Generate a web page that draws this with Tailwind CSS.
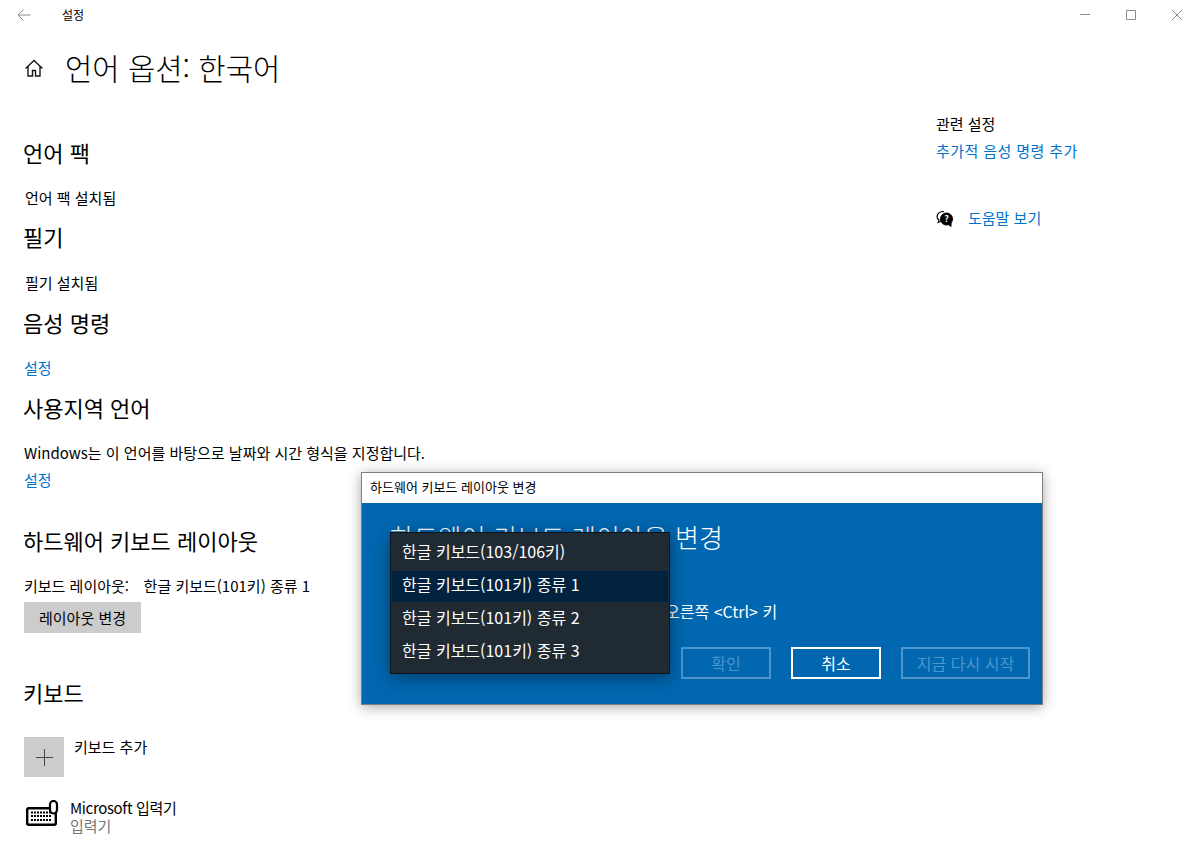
<!DOCTYPE html>
<html lang="ko">
<head>
    <meta charset="UTF-8">
    <title>설정</title>
    <script src="https://cdn.jsdelivr.net/npm/@tailwindcss/browser@4"></script>
</head>
<body class="relative w-[1194px] h-[850px] overflow-hidden bg-white text-[15px] leading-[20px] text-black font-['Noto_Sans_CJK_KR','Noto_Sans',sans-serif]">
    <!-- title bar -->
    <header class="flex items-center h-[30px] pl-[17px]">
        <svg class="w-[14px] h-[14px] text-[#8a8a8a]" viewBox="0 0 14 14" fill="none" stroke="currentColor" stroke-width="1"><path d="M13.500 7H1M6.500 1.500 1 7l5.500 5.500"/></svg>
        <span class="ml-[31px] mb-[1px] text-[12px]">설정</span>
        <div class="ml-auto flex items-center gap-[36px] pr-[12px] text-[#8c8c8c]">
            <svg class="w-[10px] h-[10px]" viewBox="0 0 10 10" stroke="currentColor" fill="none"><path d="M0 4.500h10"/></svg>
            <svg class="w-[10px] h-[10px]" viewBox="0 0 10 10" stroke="currentColor" fill="none"><path d="M.5.5h9v9h-9z"/></svg>
            <svg class="w-[10px] h-[10px]" viewBox="0 0 10 10" stroke="currentColor" fill="none"><path d="M0 0l10 10M10 0 0 10"/></svg>
        </div>
    </header>

    <div class="flex">
        <main class="w-[936px] pl-[24px]">
            <div class="flex items-center h-[40px] mt-[18px]">
                <svg class="w-[20px] h-[20px]" viewBox="0 0 20 20" fill="none" stroke="#1a1a1a" stroke-width="1.400"><path d="M1.500 10.500 10 2.500l8.500 8M4 8.500V18h4.500v-5.500h3V18H16V8.500"/></svg>
                <h1 class="ml-[21px] text-[29.7px] leading-[40px] font-light">언어 옵션: 한국어</h1>
            </div>

            <h2 class="mt-[49px] -ml-[1px] text-[22px] leading-[30px]">언어 팩</h2>
            <p class="mt-[21px] ml-[1px]">언어 팩 설치됨</p>
            <h2 class="mt-[13px] -ml-[1px] text-[22px] leading-[30px]">필기</h2>
            <p class="mt-[22px] ml-[1px]">필기 설치됨</p>
            <h2 class="mt-[14px] -ml-[1px] text-[22px] leading-[30px]">음성 명령</h2>
            <a class="block mt-[21px] text-[#0073cf]">설정</a>
            <h2 class="mt-[14px] -ml-[1px] text-[22px] leading-[30px]">사용지역 언어</h2>
            <p class="mt-[21px]">Windows는 이 언어를 바탕으로 날짜와 시간 형식을 지정합니다.</p>
            <a class="block mt-[7px] text-[#0073cf]">설정</a>
            <h2 class="mt-[35px] -ml-[1px] text-[22px] leading-[30px]">하드웨어 키보드 레이아웃</h2>
            <p class="mt-[21px]">키보드 레이아웃:&nbsp;&nbsp; <span class="ml-[2px]">한글 키보드(101키) 종류 1</span></p>
            <button class="block mt-[6px] w-[117px] h-[31px] bg-[#cccccc]">레이아웃 변경</button>
            <h2 class="mt-[44px] -ml-[1px] text-[22px] leading-[30px]">키보드</h2>

            <div class="flex mt-[30px]">
                <div class="flex items-center justify-center w-[40px] h-[40px] bg-[#cccccc]">
                    <svg class="w-[17px] h-[17px]" viewBox="0 0 17 17" stroke="#444" fill="none"><path d="M8.500 0v17M0 8.500h17"/></svg>
                </div>
                <span class="ml-[10px]">키보드 추가</span>
            </div>
            <div class="flex mt-[20px]">
                <svg class="w-[34px] h-[28px] mt-[3px] ml-[2px]" viewBox="0 0 34 28" fill="none" stroke="#000">
                    <rect x="1.200" y="8.200" width="28.600" height="16.600" rx="1.500" stroke-width="2.400"/>
                    <path d="M5 12.500h20M5 16h20M5 20h20" stroke-width="2.200" stroke-dasharray="2 1"/>
                    <rect x="24" y="1" width="7" height="12.500" rx="3.500" fill="#fff" stroke-width="2.200"/>
                </svg>
                <div class="ml-[10px] mt-[1px]">
                    <p class="leading-[19px] tracking-[-0.35px]">Microsoft 입력기</p>
                    <p class="leading-[18px] text-[#767676]">입력기</p>
                </div>
            </div>
        </main>

        <aside class="pt-[84px]">
            <p>관련 설정</p>
            <a class="block mt-[7px] text-[#0073cf] tracking-[0.4px]">추가적 음성 명령 추가</a>
            <div class="flex items-center mt-[47px]">
                <svg class="w-[17px] h-[17px]" viewBox="0 0 17 17" fill="none" stroke="#000">
                    <path d="M8 1.500C4 1.500 1 3.500 1 6.500c0 1.500.8 2.700 2 3.500l-.8 2.500L5.500 11" stroke-width="1.200"/>
                    <circle cx="10.500" cy="9" r="6" fill="#000"/>
                    <path d="m12 14 3 2.500V12" fill="#000"/>
                    <text x="10.500" y="12" text-anchor="middle" font-size="9" font-weight="700" fill="#fff" stroke="none">?</text>
                </svg>
                <a class="ml-[15px] text-[#0073cf]">도움말 보기</a>
            </div>
        </aside>
    </div>

    <!-- dialog window -->
    <section class="absolute left-[361px] top-[472px] w-[682px] h-[233px] border border-[#7d7d7d] shadow-[0_2px_12px_rgba(0,0,0,0.35)] flex flex-col">
        <div class="h-[30px] bg-white pl-[8px] text-[13px] leading-[28px]">하드웨어 키보드 레이아웃 변경</div>
        <div class="relative flex-1 bg-[#0067b0] text-white text-[16px]">
            <h3 class="mt-[16px] ml-[28px] text-[26px] leading-[36px] font-light">하드웨어 키보드 레이아웃 변경</h3>
            <p class="mt-[46px] ml-[303px]">오른쪽 &lt;Ctrl&gt; 키</p>
            <div class="flex justify-end gap-[20px] mt-[26px] pr-[12px]">
                <button class="w-[90px] h-[32px] border-2 border-[#4d95cb] text-[#4d95cb]">확인</button>
                <button class="w-[90px] h-[32px] border-2 border-white">취소</button>
                <button class="w-[129px] h-[32px] border-2 border-[#4d95cb] text-[#4d95cb]">지금 다시 시작</button>
            </div>

            <!-- open dropdown -->
            <ul class="absolute left-[28px] top-[29px] w-[280px] h-[142px] border border-[#0d1318] bg-[#1f2a33] pt-[4px] shadow-[0_4px_16px_rgba(0,0,0,0.4)]">
                <li class="h-[33px] py-[1px]"><div class="h-[31px] px-[11px] leading-[27px]">한글 키보드(103/106키)</div></li>
                <li class="h-[33px] py-[1px]"><div class="h-[31px] mx-[1px] px-[10px] leading-[27px] bg-[#012340]">한글 키보드(101키) 종류 1</div></li>
                <li class="h-[33px] py-[1px]"><div class="h-[31px] px-[11px] leading-[27px]">한글 키보드(101키) 종류 2</div></li>
                <li class="h-[33px] py-[1px]"><div class="h-[31px] px-[11px] leading-[27px]">한글 키보드(101키) 종류 3</div></li>
            </ul>
        </div>
    </section>
</body>
</html>
